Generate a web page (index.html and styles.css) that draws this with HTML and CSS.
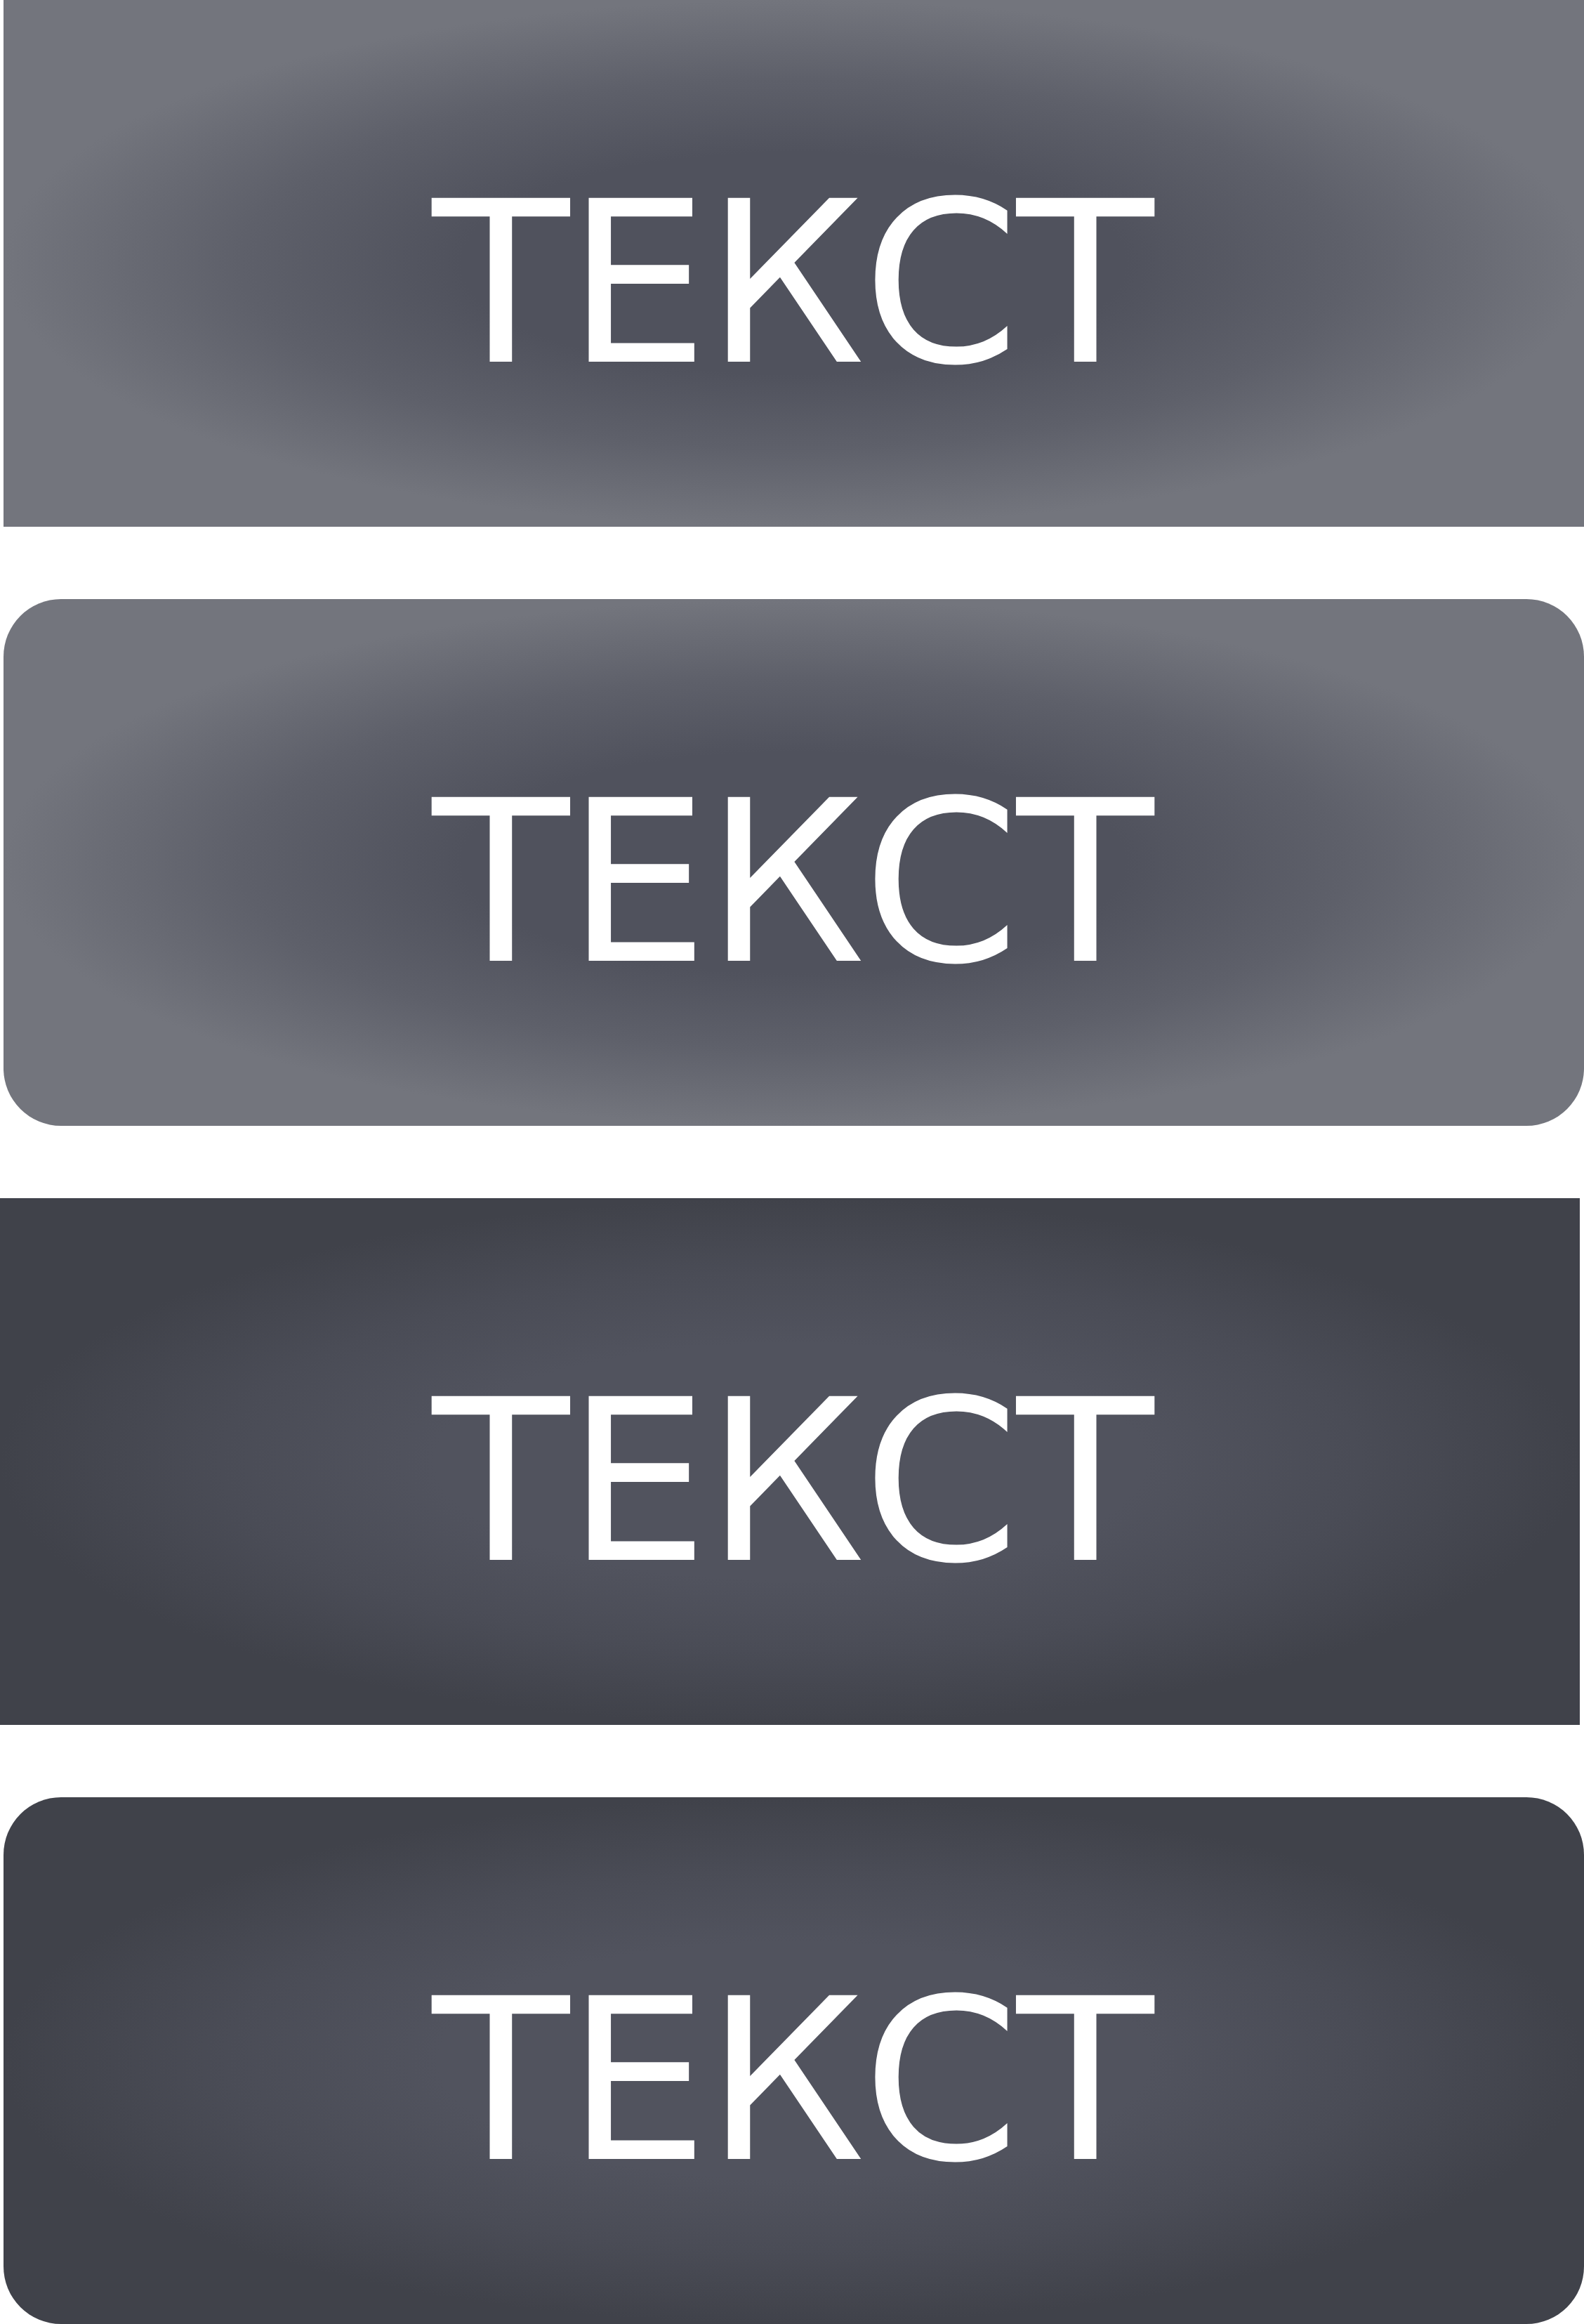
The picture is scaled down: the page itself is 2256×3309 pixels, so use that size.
FILE: index.html
```html
<!DOCTYPE html>
<html lang="ru">
<head>
<meta charset="utf-8">
<title>Кнопки</title>
<link rel="stylesheet" href="styles.css">
</head>
<body>
<main class="stack">
  <div class="btn btn-light btn-shift"><span class="label">ТЕКСТ</span></div>
  <div class="btn btn-light btn-round btn-shift"><span class="label">ТЕКСТ</span></div>
  <div class="btn btn-dark btn-noshift"><span class="label">ТЕКСТ</span></div>
  <div class="btn btn-dark btn-round btn-shift"><span class="label">ТЕКСТ</span></div>
</main>
</body>
</html>
```
FILE: styles.css
```css
html, body {
  margin: 0;
  padding: 0;
  background: #ffffff;
}

.stack {
  display: flex;
  flex-direction: column;
  gap: 103px;
  width: 2256px;
}

.btn {
  height: 750px;
  width: 2251px;
  display: flex;
  align-items: center;
  justify-content: center;
  box-sizing: border-box;
  padding-top: 58px;
  padding-right: 6px;
}

.btn-shift {
  margin-left: 5px;
}

.btn-noshift {
  margin-left: 0;
  width: 2250px;
  padding-right: 0;
  padding-left: 5px;
}

.btn-round {
  border-radius: 82px;
}

.btn-light {
  background-color: #73757d;
  background-image: radial-gradient(closest-side ellipse at center, #50525d 0%, #50525d 42%, #5e606a 70%, #73757d 100%);
}

.btn-dark {
  background-color: #40424a;
  background-image: radial-gradient(closest-side ellipse at center, #51535e 0%, #51535e 45%, #4a4c56 72%, #40424a 100%);
}

.label {
  font-family: "DejaVu Sans", "Noto Sans", sans-serif;
  font-weight: 400;
  font-size: 320px;
  line-height: 1;
  color: #ffffff;
  letter-spacing: -4px;
  white-space: nowrap;
}
```
